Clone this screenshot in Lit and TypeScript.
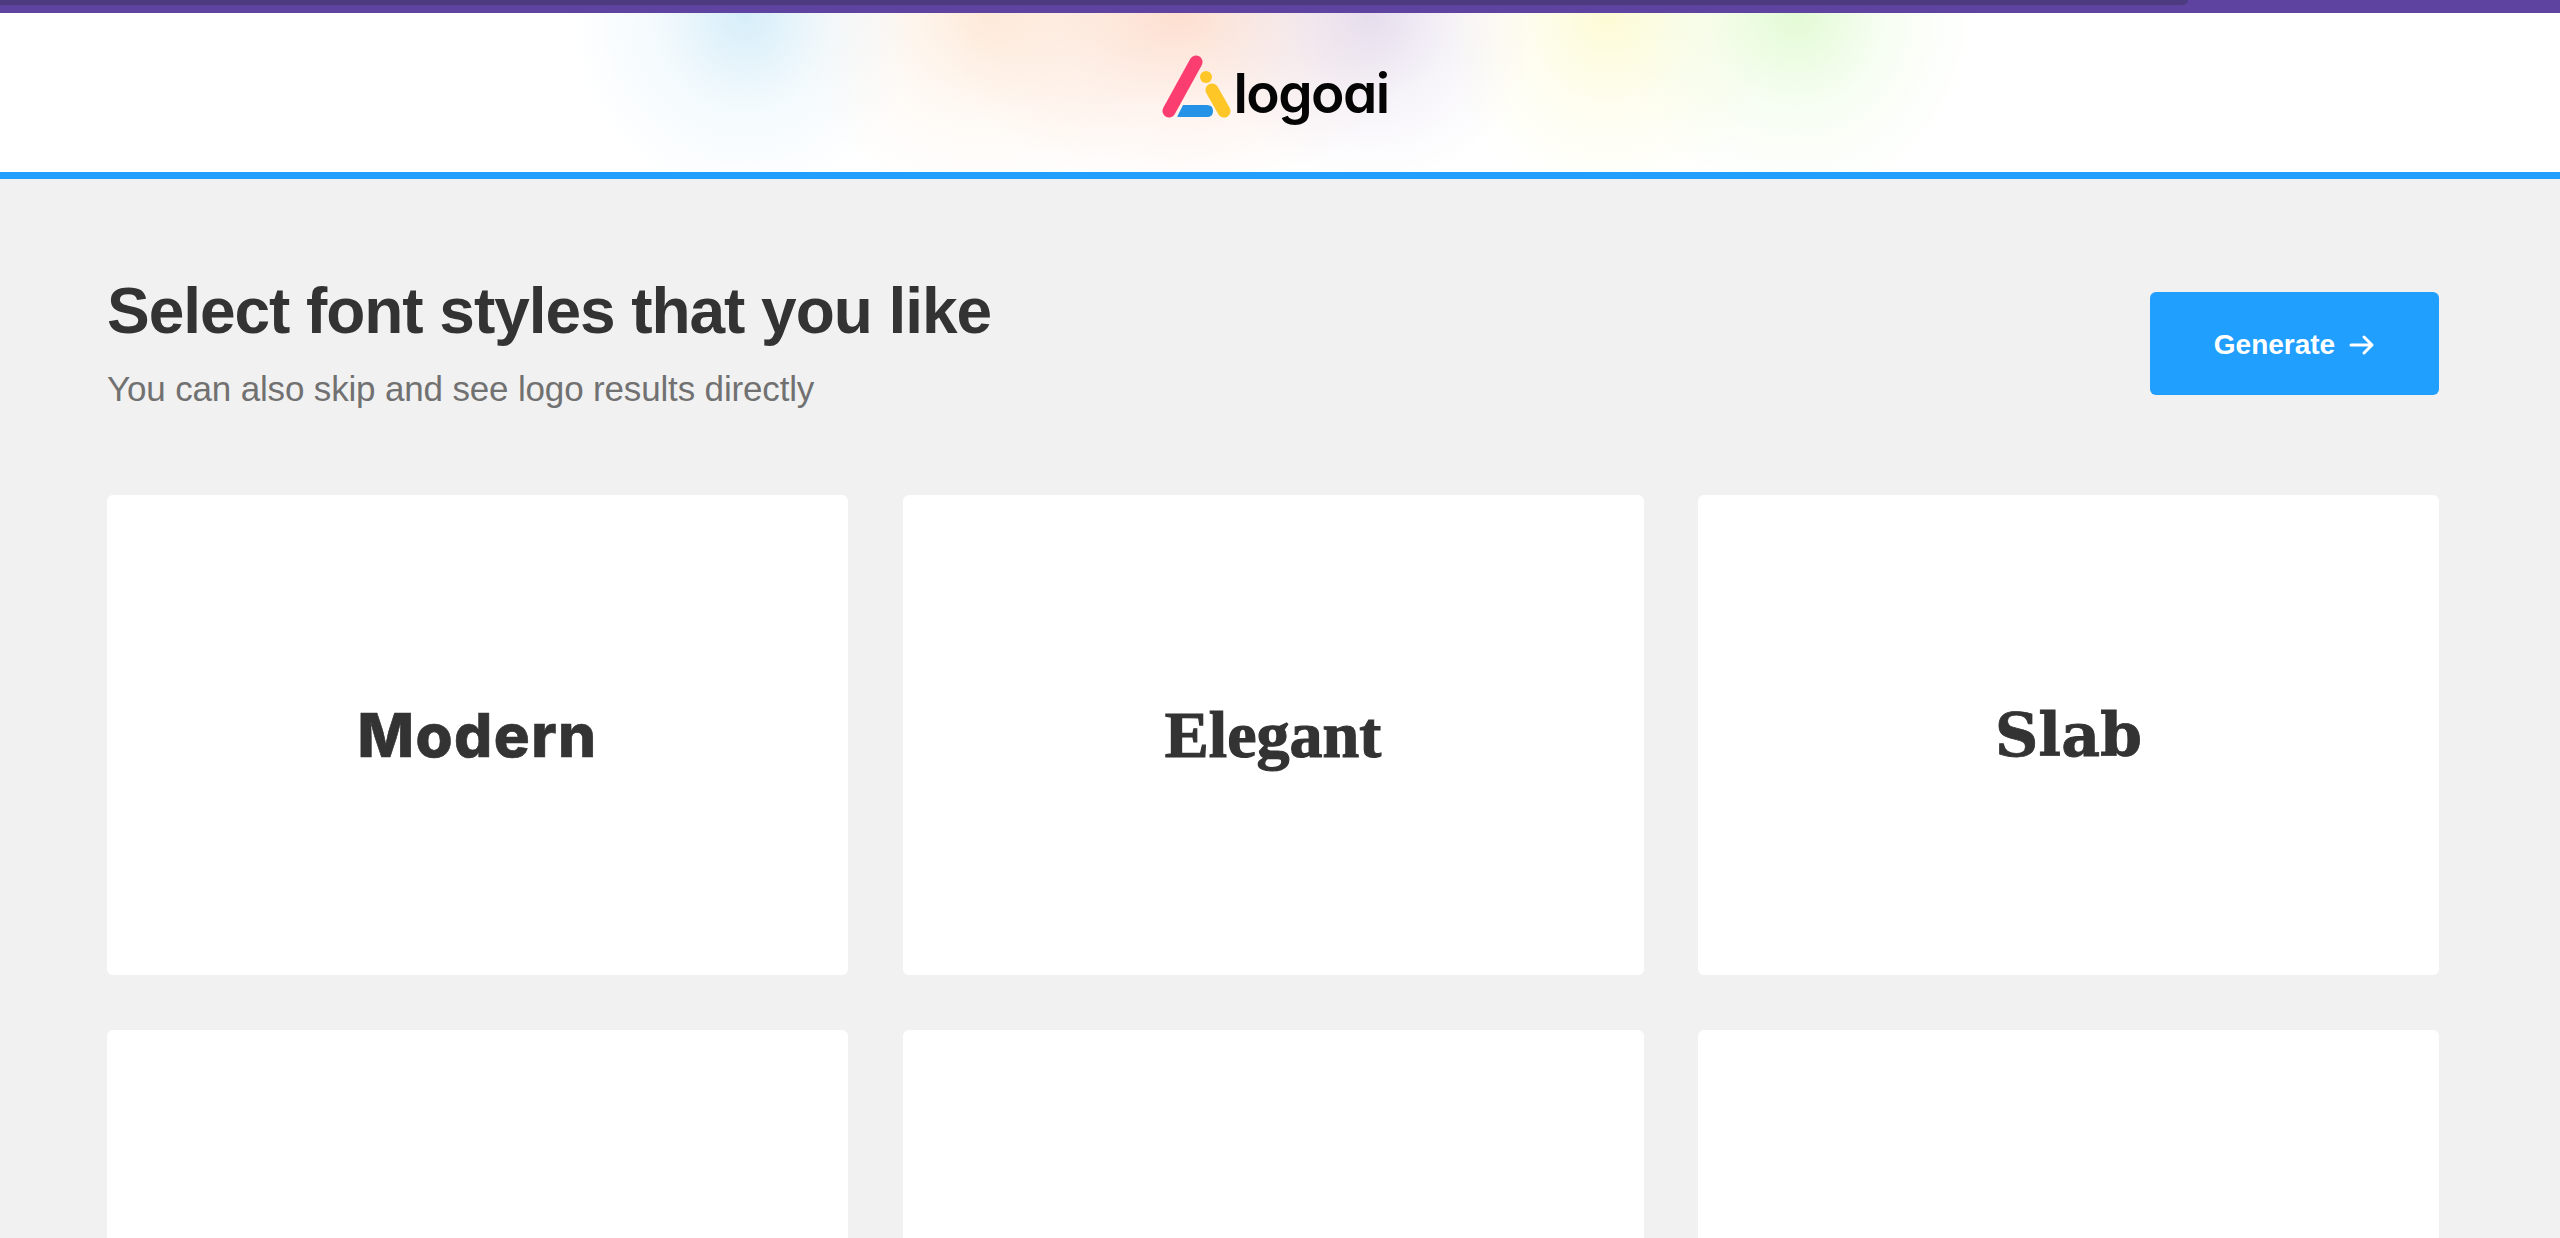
import { LitElement, html, css } from "lit";
import { customElement } from "lit/decorators.js";

@customElement("app-root")
export class AppRoot extends LitElement {
  static styles = css`
    :host { display: block; height: 100vh; overflow: hidden; background: #f1f1f1; font-family: "Liberation Sans", Arial, sans-serif; }
    .topbar { height: 13px; background: #5e43a1; }
    .tab { width: 2188px; height: 5px; background: #4d3b80; border-bottom-right-radius: 8px; }
    header {
      height: 159px; box-sizing: border-box; display: flex; align-items: center; justify-content: center;
      padding: 0 11px 0 0;
      background:
        radial-gradient(ellipse 175px 190px at 745px 0, rgba(196,230,246,.7), rgba(196,230,246,.2) 50%, rgba(196,230,246,0) 100%),
        radial-gradient(ellipse 180px 190px at 1796px 0, rgba(222,250,205,.85), rgba(222,250,205,.25) 50%, rgba(222,250,205,0) 100%),
        radial-gradient(ellipse 170px 190px at 1608px 0, rgba(253,250,205,.85), rgba(253,250,205,.3) 50%, rgba(253,250,205,0) 100%),
        radial-gradient(ellipse 170px 170px at 1371px 0, rgba(224,214,234,.8), rgba(224,214,234,.25) 55%, rgba(224,214,234,0) 100%),
        radial-gradient(ellipse 240px 180px at 1180px 0, rgba(252,212,192,.75), rgba(252,212,192,.25) 55%, rgba(252,212,192,0) 100%),
        radial-gradient(ellipse 200px 190px at 985px 0, rgba(253,228,205,.7), rgba(253,228,205,.2) 55%, rgba(253,228,205,0) 100%),
        #fff;
    }
    .logo { display: flex; align-items: center; gap: 1px; }
    .mark { width: 72px; height: 72px; display: block; margin-top: -13px; }
    .word { font-family: Inter, sans-serif; font-weight: 600; font-size: 55px; line-height: 72px; letter-spacing: -1.6px; color: #050505; font-feature-settings: "cv11"; }
    .rule { height: 7px; background: #209fff; }
    main { padding: 96px 121px 0 107px; }
    .head { display: flex; justify-content: space-between; align-items: flex-start; height: 220px; }
    h1 { margin: 0; font-size: 64px; line-height: 72px; font-weight: 700; color: #333; letter-spacing: -1.05px; }
    p { margin: 22px 0 0; font-size: 35px; line-height: 40px; color: #717171; letter-spacing: -0.16px; }
    .btn { width: 289px; height: 103px; margin-top: 17px; padding: 2px 0 0; border: 0; border-radius: 6px; background: #209fff; color: #fff; font: 700 28px "Liberation Sans", Arial, sans-serif; display: flex; align-items: center; justify-content: center; gap: 14px; }
    .btn svg { width: 26px; height: 26px; display: block; }
    .grid { display: grid; grid-template-columns: repeat(3, 741px); grid-auto-rows: 480px; gap: 54.5px; }
    .card { background: #fff; border-radius: 6px; display: flex; align-items: center; justify-content: center; color: #333; }
    .modern { font-family: Inter, sans-serif; font-weight: 800; font-size: 60px; letter-spacing: 1.4px; -webkit-text-stroke: 0.6px #333; }
    .elegant { font-family: "Liberation Serif", serif; font-weight: 700; font-size: 66px; -webkit-text-stroke: 1.2px #333; }
    .slab { font-family: "DejaVu Serif", serif; font-weight: 700; font-size: 60px; -webkit-text-stroke: 0.8px #333; }
  `;

  render() {
    return html`
      <div class="topbar"><div class="tab"></div></div>
      <header>
        <div class="logo">
          <svg class="mark" viewBox="0 0 72 72" fill="none" aria-hidden="true">
            <path d="M35 12 L8 61" stroke="#fb3d6f" stroke-width="13" stroke-linecap="round"/>
            <circle cx="45" cy="27" r="6" fill="#fec627"/>
            <path d="M51 40 L63 61" stroke="#fec627" stroke-width="13" stroke-linecap="round"/>
            <path d="M22 55 H46 Q52 55 52 61 Q52 67 46 67 H17 Q16 67 16.5 66 Z" fill="#2492e6"/>
          </svg>
          <span class="word">logoai</span>
        </div>
      </header>
      <div class="rule"></div>
      <main>
        <div class="head">
          <div>
            <h1>Select font styles that you like</h1>
            <p>You can also skip and see logo results directly</p>
          </div>
          <button class="btn">Generate
            <svg viewBox="0 0 26 26" fill="none" stroke="#fff" stroke-width="3" stroke-linecap="round" stroke-linejoin="round" aria-hidden="true">
              <path d="M2 13 H23 M15 5 L23 13 L15 21"/>
            </svg>
          </button>
        </div>
        <div class="grid">
          <div class="card"><span class="modern">Modern</span></div>
          <div class="card"><span class="elegant">Elegant</span></div>
          <div class="card"><span class="slab">Slab</span></div>
          <div class="card"></div>
          <div class="card"></div>
          <div class="card"></div>
        </div>
      </main>
    `;
  }
}
